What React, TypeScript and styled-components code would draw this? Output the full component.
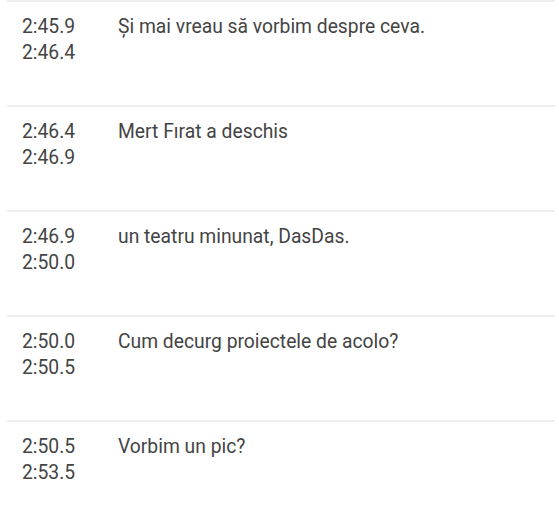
import React from "react";
import styled, { createGlobalStyle } from "styled-components";

const Global = createGlobalStyle`
  html, body { margin: 0; padding: 0; background: #fff; }
  body { font-family: Roboto, "Noto Sans", sans-serif; }
`;

const List = styled.div`
  margin-left: 7px;
  width: 548px;
`;

const Row = styled.div`
  display: grid;
  grid-template-columns: 96px 1fr;
  height: 105px;
  box-sizing: border-box;
  padding: 12px 0 0 15px;
  border-top: 2px solid #eeeeee;
  color: #444444;
  font-size: 19.3px;
  line-height: 26px;
`;

const Times = styled.div`
  display: flex;
  flex-direction: column;
`;

const Text = styled.div``;

const items = [
  ["2:45.9", "2:46.4", "Și mai vreau să vorbim despre ceva."],
  ["2:46.4", "2:46.9", "Mert Fırat a deschis"],
  ["2:46.9", "2:50.0", "un teatru minunat, DasDas."],
  ["2:50.0", "2:50.5", "Cum decurg proiectele de acolo?"],
  ["2:50.5", "2:53.5", "Vorbim un pic?"],
];

export default function App() {
  return (
    <>
      <Global />
      <List>
        {items.map(([a, b, t], i) => (
          <Row key={i}>
            <Times>
              <span>{a}</span>
              <span>{b}</span>
            </Times>
            <Text>{t}</Text>
          </Row>
        ))}
      </List>
    </>
  );
}
